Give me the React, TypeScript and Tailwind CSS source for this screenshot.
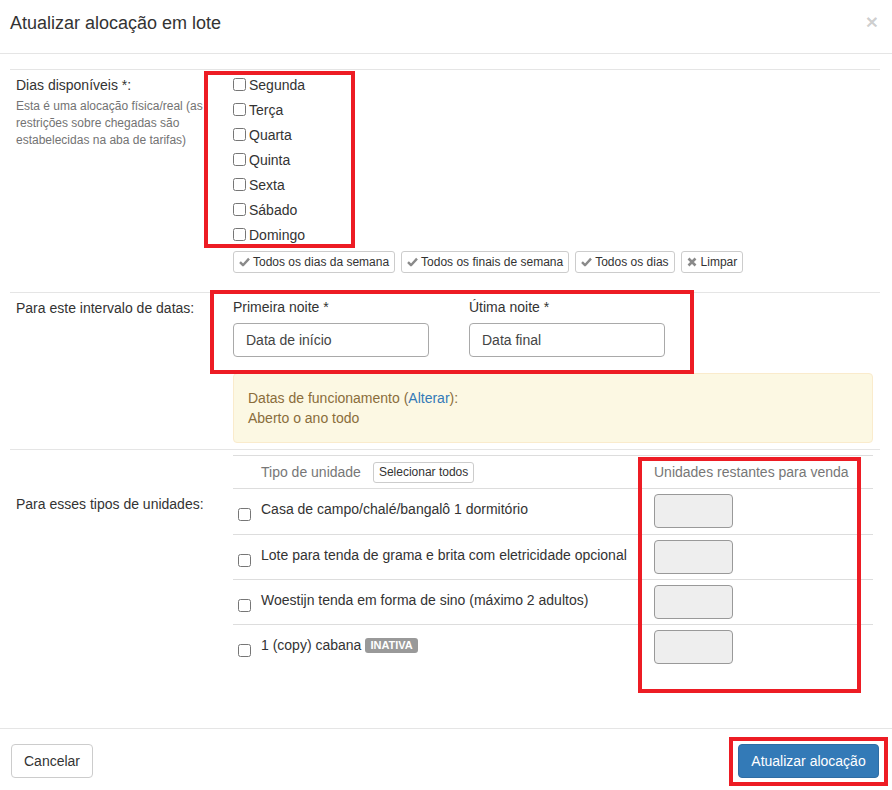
import React from "react";

const days = ["Segunda", "Terça", "Quarta", "Quinta", "Sexta", "Sábado", "Domingo"];

const units = [
  { name: "Casa de campo/chalé/bangalô 1 dormitório" },
  { name: "Lote para tenda de grama e brita com eletricidade opcional" },
  { name: "Woestijn tenda em forma de sino (máximo 2 adultos)" },
  { name: "1 (copy) cabana", inactive: true },
];

function OkIcon() {
  return (
    <svg width="11" height="10" viewBox="0 0 11 10" className="shrink-0">
      <path d="M1 5.2 L4 8.2 L10 1.6" fill="none" stroke="#8a8a8a" strokeWidth="2.4" strokeLinejoin="round" />
    </svg>
  );
}

function RemoveIcon() {
  return (
    <svg width="10" height="10" viewBox="0 0 10 10" className="shrink-0">
      <path d="M1.5 1.5 L8.5 8.5 M8.5 1.5 L1.5 8.5" fill="none" stroke="#8a8a8a" strokeWidth="2.6" />
    </svg>
  );
}

function Checkbox() {
  return <input type="checkbox" className="m-0 h-[13px] w-[13px] shrink-0" readOnly />;
}

export default function App() {
  return (
    <div className="relative h-[790px] w-[892px] overflow-hidden bg-white font-['Liberation_Sans',Arial,sans-serif] text-[14px] leading-[20px] text-[#333]">
      {/* header */}
      <div className="flex h-[54px] items-start justify-between border-b border-[#e5e5e5] pl-[10px] pr-[14px] pt-[12px]">
        <h4 className="text-[18px] leading-[22px]">Atualizar alocação em lote</h4>
        <span className="text-[21px] font-bold leading-[20px] text-black/20">×</span>
      </div>

      {/* body */}
      <div className="pt-[15px]">
        {/* dias */}
        <div className="ml-[10px] mr-[12px] flex border-t border-[#e5e5e5]">
          <div className="w-[223px] shrink-0 pl-[6px] pr-[17px] pt-[5px]">
            <p>Dias disponíveis *:</p>
            <p className="mt-[3px] text-[12px] leading-[17px] text-[#737373]">
              Esta é uma alocação física/real (as restrições sobre chegadas são estabelecidas na aba de tarifas)
            </p>
          </div>
          <div className="flex-1 pb-[19px] pt-[2px]">
            {days.map((d) => (
              <label key={d} className="flex h-[25px] items-center gap-[3px]">
                <Checkbox />
                <span>{d}</span>
              </label>
            ))}
            <div className="mt-[4px] flex gap-[6px] text-[12px] leading-[18px]">
              {["Todos os dias da semana", "Todos os finais de semana", "Todos os dias"].map((t) => (
                <button
                  key={t}
                  className="flex h-[22px] items-center gap-[3px] rounded-[3px] border border-[#ccc] bg-white pl-[5px] pr-[5px] text-[#333]"
                >
                  <OkIcon />
                  {t}
                </button>
              ))}
              <button className="flex h-[22px] items-center gap-[4px] rounded-[3px] border border-[#ccc] bg-white px-[5px] text-[#333]">
                <RemoveIcon />
                Limpar
              </button>
            </div>
          </div>
        </div>

        {/* datas */}
        <div className="ml-[10px] mr-[12px] flex border-t border-[#e5e5e5]">
          <div className="w-[223px] shrink-0 pl-[6px] pt-[5px]">
            <p>Para este intervalo de datas:</p>
          </div>
          <div className="flex-1 pb-[6px] pt-[4px]">
            <div className="flex">
              <div className="w-[236px]">
                <p className="mb-[6px]">Primeira noite *</p>
                <div className="flex h-[34px] w-[196px] items-center rounded-[4px] border border-[#a9a9a9] px-[12px] text-[#444]">
                  Data de início
                </div>
              </div>
              <div className="w-[236px]">
                <p className="mb-[6px]">Útima noite *</p>
                <div className="flex h-[34px] w-[196px] items-center rounded-[4px] border border-[#a9a9a9] px-[12px] text-[#444]">
                  Data final
                </div>
              </div>
            </div>
            <div className="mr-[7px] mt-[16px] rounded-[4px] border border-[#faebcc] bg-[#fcf8e3] px-[14px] py-[14px] text-[#8a6d3b]">
              <p>
                Datas de funcionamento (<span className="text-[#337ab7]">Alterar</span>):
              </p>
              <p>Aberto o ano todo</p>
            </div>
          </div>
        </div>

        {/* unidades */}
        <div className="ml-[10px] mr-[12px] flex border-t border-[#e5e5e5]">
          <div className="w-[223px] shrink-0 pl-[6px] pt-[44px]">
            <p>Para esses tipos de unidades:</p>
          </div>
          <div className="flex-1 pb-[59px] pt-[5px]">
            <div className="mr-[7px]">
              <div className="flex h-[34px] items-center border-y border-[#ddd] text-[#777]">
                <div className="w-[23px] shrink-0" />
                <div className="flex flex-1 items-center pl-[5px]">
                  <span>Tipo de unidade</span>
                  <button className="ml-[12px] h-[21px] rounded-[3px] border border-[#ccc] bg-white px-[5px] text-[12px] leading-[17px] text-[#333]">
                    Selecionar todos
                  </button>
                </div>
                <div className="w-[224px] shrink-0 pl-[5px]">Unidades restantes para venda</div>
              </div>
              {units.map((u, i) => (
                <div
                  key={u.name}
                  className={i > 0 ? "flex h-[45px] items-start border-t border-[#ddd]" : "flex h-[45px] items-start"}
                >
                  <div className="w-[23px] shrink-0 pl-[5px] pt-[17px]">
                    <Checkbox />
                  </div>
                  <div className="flex flex-1 items-center pl-[5px] pt-[10px]">
                    <span>{u.name}</span>
                    {u.inactive && (
                      <span className="ml-[4px] rounded-[3px] bg-[#999] px-[5px] text-[11px] font-bold leading-[15px] text-white">
                        INATIVA
                      </span>
                    )}
                  </div>
                  <div className="w-[224px] shrink-0 pl-[5px] pt-[5px]">
                    <div className="h-[34px] w-[79px] rounded-[4px] border border-[#999] bg-[#eee]" />
                  </div>
                </div>
              ))}
            </div>
          </div>
        </div>
      </div>

      {/* footer */}
      <div className="flex items-start justify-between border-t border-[#e5e5e5] pl-[11px] pr-[13px] pt-[15px]">
        <button className="h-[34px] w-[82px] rounded-[4px] border border-[#ccc] bg-white text-[#333]">Cancelar</button>
        <button className="h-[34px] w-[141px] rounded-[4px] border border-[#2e6da4] bg-[#337ab7] text-white">
          Atualizar alocação
        </button>
      </div>

      {/* red annotation boxes */}
      <div className="pointer-events-none absolute left-[204px] top-[71px] h-[177px] w-[151px] border-4 border-[#ed1c24]" />
      <div className="pointer-events-none absolute left-[210px] top-[290px] h-[84px] w-[484px] border-4 border-[#ed1c24]" />
      <div className="pointer-events-none absolute left-[638px] top-[457px] h-[236px] w-[223px] border-4 border-[#ed1c24]" />
      <div className="pointer-events-none absolute left-[729px] top-[737px] h-[49px] w-[159px] border-4 border-[#ed1c24]" />
    </div>
  );
}
